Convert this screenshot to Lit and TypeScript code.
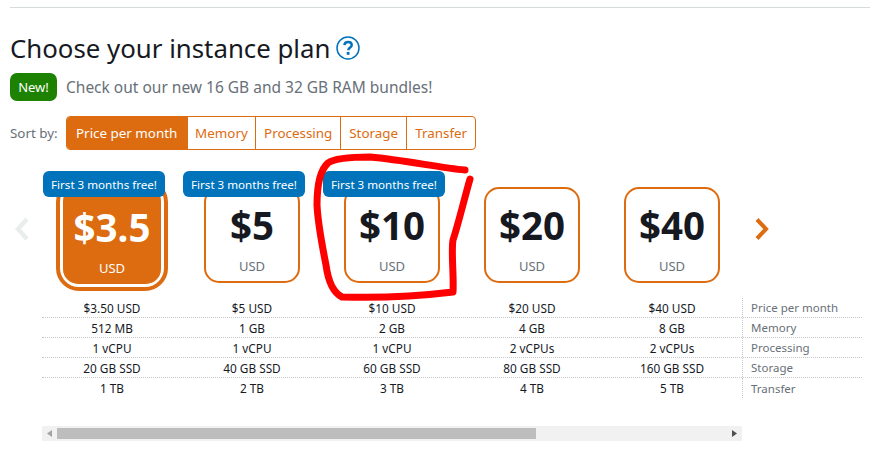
import { LitElement, html, css, svg } from "lit";
import { customElement } from "lit/decorators.js";

const plans = [
  { amount: "$3.5", price: "$3.50 USD", memory: "512 MB", cpu: "1 vCPU", storage: "20 GB SSD", transfer: "1 TB", promo: true, selected: true },
  { amount: "$5", price: "$5 USD", memory: "1 GB", cpu: "1 vCPU", storage: "40 GB SSD", transfer: "2 TB", promo: true, selected: false },
  { amount: "$10", price: "$10 USD", memory: "2 GB", cpu: "1 vCPU", storage: "60 GB SSD", transfer: "3 TB", promo: true, selected: false },
  { amount: "$20", price: "$20 USD", memory: "4 GB", cpu: "2 vCPUs", storage: "80 GB SSD", transfer: "4 TB", promo: false, selected: false },
  { amount: "$40", price: "$40 USD", memory: "8 GB", cpu: "2 vCPUs", storage: "160 GB SSD", transfer: "5 TB", promo: false, selected: false },
];
const rows: [string, "price" | "memory" | "cpu" | "storage" | "transfer"][] = [
  ["Price per month", "price"],
  ["Memory", "memory"],
  ["Processing", "cpu"],
  ["Storage", "storage"],
  ["Transfer", "transfer"],
];
const sorts = ["Price per month", "Memory", "Processing", "Storage", "Transfer"];

@customElement("app-root")
export class AppRoot extends LitElement {
  static styles = css`
    :host { display: block; position: relative; width: 870px; height: 454px; overflow: hidden; background: #fff;
      font-family: "Noto Sans", sans-serif; color: #16191f; }
    .page { padding: 7px 0 0 10px; }
    .rule { height: 1px; background: #d5dbdb; }
    .title { display: flex; align-items: center; gap: 6px; margin-top: 20px; height: 40px; }
    h1 { margin: 0; font-weight: 400; font-size: 25.8px; line-height: 40px; }
    .help { width: 24px; height: 24px; display: block; }
    .news { display: flex; align-items: center; gap: 9px; margin-top: 5px; height: 28px; font-size: 15.5px; color: #687078; }
    .new { width: 47px; height: 28px; border-radius: 7px; background: #1d8102; color: #fff; font-size: 13px;
      display: flex; align-items: center; justify-content: center; }
    .sort { display: flex; align-items: center; gap: 8px; margin-top: 15px; font-size: 13.4px; color: #687078; height: 34px; }
    .tabs { display: flex; height: 34px; box-sizing: border-box; border: 1px solid #dd6b10; border-radius: 4px; }
    .tab { display: flex; align-items: center; justify-content: center; box-sizing: border-box; color: #dd6b10;
      border-left: 1px solid #dd6b10; }
    .tab:first-child { border-left: 0; background: #dd6b10; color: #fff; border-radius: 3px 0 0 3px; }
    .carousel { display: grid; grid-template-columns: 32px 700px 40px; margin-top: 27px; }
    .arrow { display: flex; align-items: center; padding-bottom: 10px; }
    .arrow svg { display: block; }
    .arrow.prev { justify-content: center; padding-right: 8px; }
    .arrow.next { padding-left: 12px; }
    .cards { display: grid; grid-template-columns: repeat(5, 140px); height: 112px; margin-top: 2px; }
    .cell { position: relative; display: flex; align-items: center; justify-content: center; }
    .card { width: 96px; height: 96px; box-sizing: border-box; border: 2px solid #dd6b10; border-radius: 15px;
      display: flex; flex-direction: column; align-items: center; padding-top: 12px; background: #fff; }
    .amount { font-size: 38.5px; line-height: 48px; font-weight: 700; color: #16191f; }
    .usd { font-size: 13px; line-height: 18px; color: #687078; margin-top: 8px; }
    .frame { width: 112px; height: 112px; box-sizing: border-box; border: 4px solid #dd6b10; border-radius: 23px;
      padding: 3px; background: #fff; display: flex; }
    .frame .card { width: 100%; height: 100%; border: 0; background: #dd6b10; border-radius: 15px; padding-top: 17px; }
    .frame .amount, .frame .usd { color: #fff; }
    .badge { position: absolute; left: 1px; top: -8px; width: 122px; height: 26px; border-radius: 6px; background: #0073bb;
      color: #fff; font-size: 11.6px; display: flex; align-items: center; justify-content: center; }
    .table { margin: 7px 0 0 32px; width: 820px; font-size: 11.8px; }
    .row { display: grid; grid-template-columns: repeat(5, 140px) 120px; height: 20px; border-bottom: 1px dotted #c4c8c8; box-sizing: border-box; }
    .row:last-child { border-bottom: 0; }
    .row > div { display: flex; align-items: center; justify-content: center; }
    .row .label { justify-content: flex-start; padding-left: 8px; color: #687078; border-left: 1px dotted #c4c8c8; font-size: 11.5px; }
    .scroll { margin: 28px 0 0 32px; width: 700px; height: 15px; background: #f1f1f1; display: flex; align-items: center; }
    .scroll .end { width: 15px; height: 15px; display: flex; align-items: center; justify-content: center; flex: none; }
    .thumb { width: 479px; height: 11px; background: #bdbdbd; }
    .spacer { flex: 1; }
    .tri { display: block; }
    .scribble { position: absolute; left: 0; top: 0; pointer-events: none; }
    .scribble path { filter: blur(0.5px); }
  `;

  render() {
    const widths = [120, 68.5, 85, 66, 69];
    return html`
      <div class="page">
        <div class="rule"></div>
        <div class="title">
          <h1>Choose your instance plan</h1>
          <svg class="help" viewBox="0 0 24 24">
            <circle cx="12" cy="12" r="11" fill="none" stroke="#0073bb" stroke-width="1.5"></circle>
            <path d="M8.4 9.200c.2-2.100 1.700-3.300 3.700-3.300 2.100 0 3.600 1.200 3.600 3 0 1.500-.9 2.300-2 3-.9.600-1.300 1.100-1.300 2.300" fill="none" stroke="#0073bb" stroke-width="2.500"></path>
            <rect x="10.700" y="16" width="2.800" height="2.800" fill="#0073bb"></rect>
          </svg>
        </div>
        <div class="news"><span class="new">New!</span><span>Check out our new 16 GB and 32 GB RAM bundles!</span></div>
        <div class="sort">
          <span>Sort by:</span>
          <div class="tabs">
            ${sorts.map((s, i) => html`<div class="tab" style="width:${widths[i]}px">${s}</div>`)}
          </div>
        </div>
        <div class="carousel">
          <div class="arrow prev">
            <svg width="16" height="26" viewBox="0 0 16 26"><path d="M13 3 4 13l9 10" fill="none" stroke="#eaeded" stroke-width="4.5"></path></svg>
          </div>
          <div class="cards">
            ${plans.map((p) => html`
              <div class="cell">
                ${p.selected
                  ? html`<div class="frame"><div class="card"><div class="amount">${p.amount}</div><div class="usd">USD</div></div></div>`
                  : html`<div class="card"><div class="amount">${p.amount}</div><div class="usd">USD</div></div>`}
                ${p.promo ? html`<div class="badge">First 3 months free!</div>` : ""}
              </div>`)}
          </div>
          <div class="arrow next">
            <svg width="16" height="26" viewBox="0 0 16 26"><path d="M3 3.5 12 13l-9 9.500" fill="none" stroke="#dd6b10" stroke-width="4"></path></svg>
          </div>
        </div>
        <div class="table">
          ${rows.map(([label, key]) => html`
            <div class="row">
              ${plans.map((p) => html`<div>${p[key]}</div>`)}
              <div class="label">${label}</div>
            </div>`)}
        </div>
        <div class="scroll">
          <div class="end"><svg class="tri" width="5" height="7" viewBox="0 0 5 7"><path d="M5 0 0 3.500 5 7z" fill="#a3a3a3"></path></svg></div>
          <div class="thumb"></div>
          <div class="spacer"></div>
          <div class="end"><svg class="tri" width="5" height="7" viewBox="0 0 5 7"><path d="M0 0 5 3.500 0 7z" fill="#505050"></path></svg></div>
        </div>
      </div>
      <svg class="scribble" width="870" height="454" viewBox="0 0 870 454">
        ${svg`<path d="M465 170 C440 168 405 160 370 157 C350 157 335 158 328 163 C320 170 317 185 317 205 C318 225 322 245 326 265 C328 280 332 292 342 297 C375 298 420 296 453 292 C454 275 451 252 453 240 C458 225 464 200 470 179" fill="none" stroke="#f00" stroke-width="7" stroke-linecap="round" stroke-linejoin="round"></path>`}
      </svg>
    `;
  }
}
